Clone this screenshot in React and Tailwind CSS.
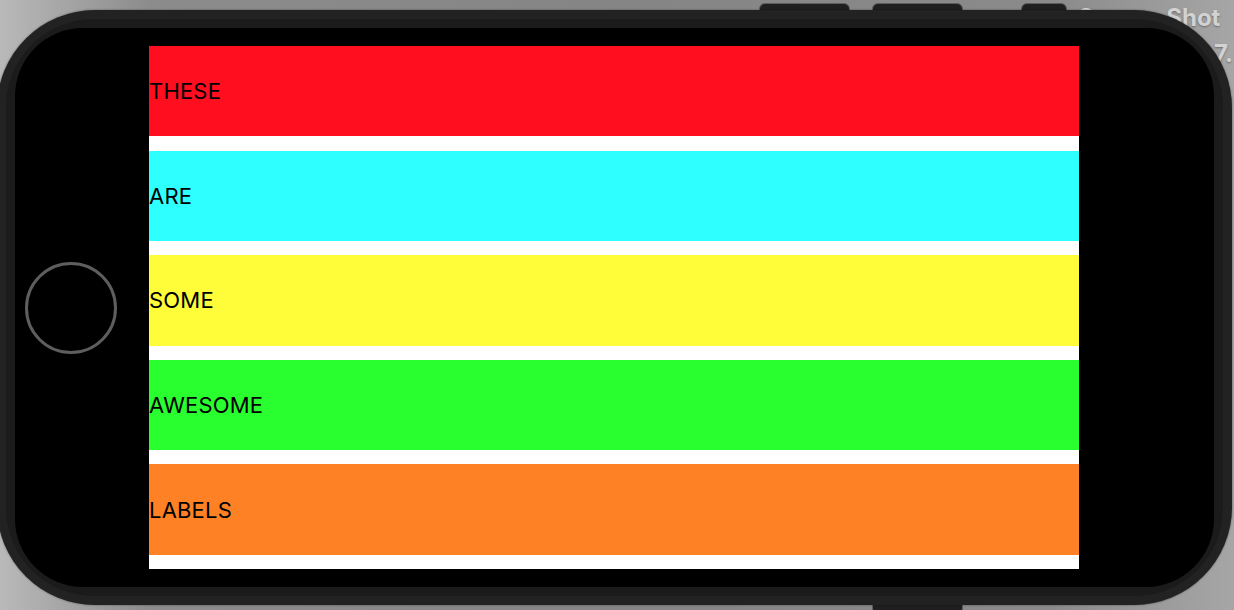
import React from 'react';

const rows = [
  { label: 'THESE', color: 'bg-[#fe0e1f]' },
  { label: 'ARE', color: 'bg-[#2effff]' },
  { label: 'SOME', color: 'bg-[#fffd3a]' },
  { label: 'AWESOME', color: 'bg-[#29fe2f]' },
  { label: 'LABELS', color: 'bg-[#fe8225]' },
];

function SideButton({ className }) {
  return (
    <div
      className={`absolute h-[14px] rounded-[6px] bg-[#1f1f1f] border border-[#5c5c5c] ${className}`}
    />
  );
}

export default function App() {
  return (
    <div className="relative w-[1234px] h-[610px] overflow-hidden bg-[linear-gradient(90deg,#b9b9b9_0%,#8c8c8c_12%,#858585_50%,#8a8a8a_85%,#a6a6a6_100%)] font-['Inter','Noto_Sans',sans-serif]">
      {/* desktop file label behind the simulator */}
      <div className="absolute left-[1078px] top-0 text-[24px] font-bold leading-[36px] text-[#d2d2d2] [text-shadow:0_1px_2px_rgba(0,0,0,0.35)] whitespace-nowrap">
        <div>Screen Shot</div>
        <div className="pl-[136px]">7.</div>
      </div>

      {/* hardware buttons */}
      <SideButton className="left-[759px] top-[3px] w-[91px]" />
      <SideButton className="left-[872px] top-[3px] w-[91px]" />
      <SideButton className="left-[1021px] top-[3px] w-[46px]" />
      <SideButton className="left-[872px] top-[600px] w-[91px]" />

      {/* device body */}
      <div className="relative z-10 mt-[10px] ml-[-3px] w-[1235px] h-[595px] rounded-[98px] bg-[#222222] p-[9px] shadow-[0_0_2px_rgba(0,0,0,0.5)]">
        <div className="h-full rounded-[88px] bg-[#1b1b1b] p-[9px]">
          <div className="flex h-full items-center rounded-[68px] bg-black">
            <div className="flex w-[134px] items-center pl-[10px]">
              <div className="h-[92px] w-[92px] rounded-full border-[3px] border-[#5e5e5e]" />
            </div>

            <div className="flex h-[523px] w-[930px] flex-col gap-[14.2px] bg-white pb-[14.2px]">
              {rows.map((row) => (
                <div
                  key={row.label}
                  className={`flex h-[90.4px] shrink-0 items-center ${row.color}`}
                >
                  <span className="text-[22px] leading-none tracking-[0.2px] text-black">{row.label}</span>
                </div>
              ))}
            </div>

            <div className="w-[133px]" />
          </div>
        </div>
      </div>
    </div>
  );
}
